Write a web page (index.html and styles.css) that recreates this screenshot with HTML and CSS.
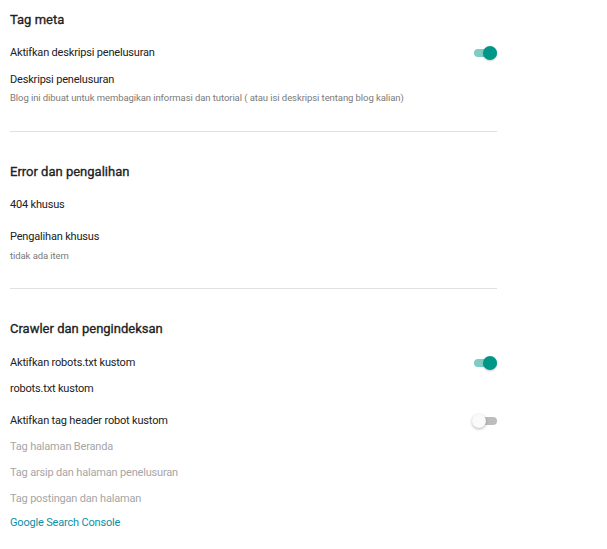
FILE: index.html
```html
<!DOCTYPE html>
<html lang="id">
<head>
<meta charset="utf-8">
<title>Setelan</title>
<link rel="stylesheet" href="styles.css">
</head>
<body>
<main class="settings">
  <section class="section first">
    <h2 class="heading">Tag meta</h2>
    <div class="row toggle-row after-heading">
      <span class="label">Aktifkan deskripsi penelusuran</span>
      <span class="switch on"><span class="track"></span><span class="knob"></span></span>
    </div>
    <div class="row gap7"><span class="label">Deskripsi penelusuran</span></div>
    <div class="sub">Blog ini dibuat untuk membagikan informasi dan tutorial ( atau isi deskripsi tentang blog kalian)</div>
  </section>
  <hr class="divider d1">
  <section class="section">
    <h2 class="heading">Error dan pengalihan</h2>
    <div class="row gap12"><span class="label">404 khusus</span></div>
    <div class="row gap12"><span class="label">Pengalihan khusus</span></div>
    <div class="sub small-gap">tidak ada item</div>
  </section>
  <hr class="divider d2">
  <section class="section">
    <h2 class="heading">Crawler dan pengindeksan</h2>
    <div class="row toggle-row gap13">
      <span class="label">Aktifkan robots.txt kustom</span>
      <span class="switch on"><span class="track"></span><span class="knob"></span></span>
    </div>
    <div class="row gap6"><span class="label">robots.txt kustom</span></div>
    <div class="row toggle-row gap12">
      <span class="label">Aktifkan tag header robot kustom</span>
      <span class="switch off"><span class="track"></span><span class="knob"></span></span>
    </div>
    <div class="row gap6"><span class="label disabled">Tag halaman Beranda</span></div>
    <div class="row gap6"><span class="label disabled">Tag arsip dan halaman penelusuran</span></div>
    <div class="row gap6"><span class="label disabled">Tag postingan dan halaman</span></div>
    <div class="row gap4"><a class="link" href="#">Google Search Console</a></div>
  </section>
</main>
</body>
</html>
```
FILE: styles.css
```css
html, body {
  margin: 0;
  padding: 0;
  background: #ffffff;
}
body {
  font-family: Roboto, "Liberation Sans", sans-serif;
  color: #212121;
}
.settings {
  width: 487px;
  padding: 10px 0 0 10px;
  display: flex;
  flex-direction: column;
}
.section {
  display: flex;
  flex-direction: column;
}
.heading {
  margin: 0;
  font-size: 13px;
  line-height: 20px;
  font-weight: 400;
  -webkit-text-stroke: 0.3px #212121;
  color: #212121;
}
.row {
  box-sizing: border-box;
  display: flex;
  align-items: center;
  justify-content: space-between;
  height: 20px;
  padding-top: 1px;
  font-size: 11px;
  line-height: 20px;
  letter-spacing: -0.18px;
}
.after-heading { margin-top: 12px; }
.gap4 { margin-top: 4px; }
.gap6 { margin-top: 6px; }
.gap7 { margin-top: 7px; }
.gap12 { margin-top: 12px; }
.gap13 { margin-top: 13px; }
.label { color: #212121; }
.label.disabled { color: #a6a6a6; }
.sub {
  margin-top: 2px;
  font-size: 9.5px;
  line-height: 14px;
  letter-spacing: -0.08px;
  color: #7a7a7a;
}
.sub.small-gap { margin-top: 3px; }
.divider {
  border: 0;
  height: 1px;
  background: #e0e0e0;
  margin: 26px 0 30px 0;
  width: 487px;
}
.d2 { margin-top: 25px; }
.link {
  color: #0b8fa8;
  text-decoration: none;
}
.switch {
  position: relative;
  width: 25px;
  height: 14px;
  flex: none;
}
.switch .track {
  position: absolute;
  left: 2px;
  top: 3px;
  width: 23px;
  height: 8px;
  border-radius: 4px;
}
.switch .knob {
  position: absolute;
  top: 0;
  width: 14px;
  height: 14px;
  border-radius: 50%;
}
.switch.on .track { background: #80cbc4; }
.switch.on .knob { left: 11px; background: #009688; box-shadow: 0 1px 2px rgba(0,0,0,0.2); }
.switch.off .track { background: #bdbdbd; }
.switch.off .knob { left: 0; background: #fafafa; box-shadow: 0 1px 3px rgba(0,0,0,0.3); }
```
